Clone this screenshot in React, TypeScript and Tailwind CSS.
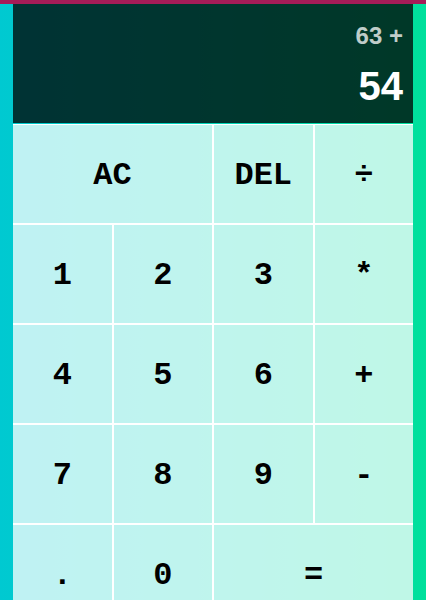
import React from 'react'

const keys: { label: string; span?: boolean }[] = [
  { label: 'AC', span: true },
  { label: 'DEL' },
  { label: '÷' },
  { label: '1' },
  { label: '2' },
  { label: '3' },
  { label: '*' },
  { label: '4' },
  { label: '5' },
  { label: '6' },
  { label: '+' },
  { label: '7' },
  { label: '8' },
  { label: '9' },
  { label: '-' },
  { label: '.' },
  { label: '0' },
  { label: '=', span: true },
]

export default function App() {
  return (
    <div className="min-h-screen bg-gradient-to-r from-[#00c9d1] to-[#00e09c]">
      <div className="h-1 bg-[#a51c58]" />
      <div className="mx-auto w-[400px] overflow-hidden">
        <div className="mb-[2px] flex h-[119px] flex-col items-end bg-black/75 px-[10px] pt-[20px] font-['Liberation_Sans',Arial,sans-serif] font-bold">
          <div className="text-[24px] leading-none text-white/75">63 +</div>
          <div className="mt-[18px] text-[40px] leading-none text-white">54</div>
        </div>
        <div className="grid grid-cols-[repeat(4,1fr)] auto-rows-[98px] gap-[2px] font-['Liberation_Mono',monospace]">
          {keys.map((k) => (
            <button
              key={k.label}
              className={`flex items-center justify-center bg-white/75 pt-[4px] text-[32px] font-bold text-black ring-1 ring-white ${
                k.span ? 'col-span-2' : ''
              }`}
            >
              {k.label}
            </button>
          ))}
        </div>
      </div>
    </div>
  )
}
